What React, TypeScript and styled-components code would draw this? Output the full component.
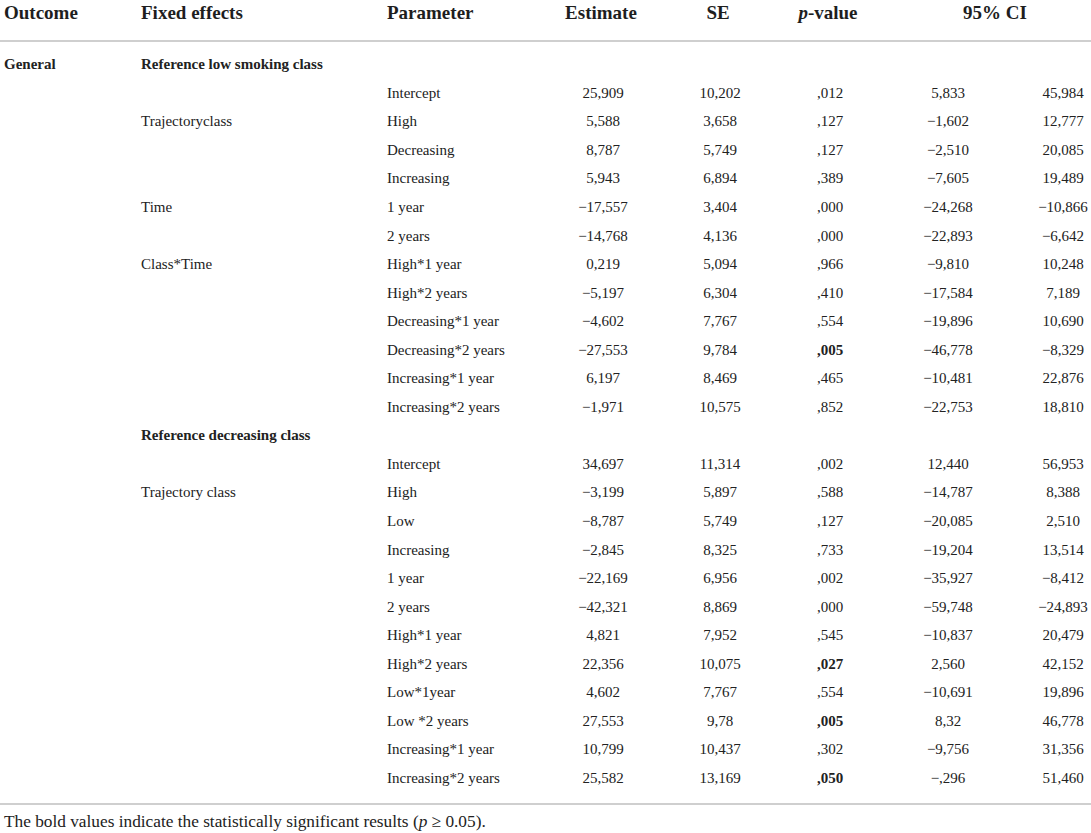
import React from "react";
import styled, { createGlobalStyle } from "styled-components";

const Global = createGlobalStyle`
  html, body { margin: 0; padding: 0; background: #ffffff; }
  body { font-family: "Liberation Serif", "Times New Roman", serif; color: #222222; }
`;

const Page = styled.div`
  width: 1091px;
`;

const Table = styled.table`
  width: 1091px;
  table-layout: fixed;
  border-collapse: collapse;
  border-spacing: 0;
`;

const HeadCell = styled.th<{ $align?: "left" | "center"; $pad?: number }>`
  height: 38px;
  padding: 2px 4px 0 ${(p) => (p.$pad ?? 4)}px;
  vertical-align: top;
  text-align: ${(p) => p.$align ?? "center"};
  font-size: 19px;
  line-height: 22px;
  font-weight: 700;
  color: #1e1e1e;
  border-bottom: 2px solid #cfcfcf;
  white-space: nowrap;
`;

const Row = styled.tr`
  height: 28.56px;
`;

const Spacer = styled.tr<{ $h: number; $line?: boolean }>`
  height: ${(p) => p.$h}px;
  & > td {
    padding: 0;
    border-bottom: ${(p) => (p.$line ? "2px solid #cfcfcf" : "none")};
  }
`;

const Label = styled.td<{ $bold?: boolean }>`
  padding: 0 4px;
  vertical-align: middle;
  text-align: left;
  font-size: 15px;
  line-height: 18px;
  font-weight: ${(p) => (p.$bold ? 700 : 400)};
  white-space: nowrap;
`;

const Num = styled.td<{ $bold?: boolean; $pad?: number }>`
  padding: 0 0 0 ${(p) => p.$pad ?? 0}px;
  vertical-align: middle;
  text-align: center;
  font-size: 15px;
  line-height: 18px;
  font-weight: ${(p) => (p.$bold ? 700 : 400)};
  white-space: nowrap;
`;

const Note = styled.p`
  margin: 7px 0 0 4px;
  font-size: 17.3px;
  line-height: 20px;
  color: #222222;
`;

type R = {
  outcome?: string;
  fixed?: string;
  fixedBold?: boolean;
  param?: string;
  v?: [string, string, string, string, string];
  pBold?: boolean;
};

const M = "\u2212";

const rows: R[] = [
  { outcome: "General", fixed: "Reference low smoking class", fixedBold: true },
  { param: "Intercept", v: ["25,909", "10,202", ",012", "5,833", "45,984"] },
  { fixed: "Trajectoryclass", param: "High", v: ["5,588", "3,658", ",127", `${M}1,602`, "12,777"] },
  { param: "Decreasing", v: ["8,787", "5,749", ",127", `${M}2,510`, "20,085"] },
  { param: "Increasing", v: ["5,943", "6,894", ",389", `${M}7,605`, "19,489"] },
  { fixed: "Time", param: "1 year", v: [`${M}17,557`, "3,404", ",000", `${M}24,268`, `${M}10,866`] },
  { param: "2 years", v: [`${M}14,768`, "4,136", ",000", `${M}22,893`, `${M}6,642`] },
  { fixed: "Class*Time", param: "High*1 year", v: ["0,219", "5,094", ",966", `${M}9,810`, "10,248"] },
  { param: "High*2 years", v: [`${M}5,197`, "6,304", ",410", `${M}17,584`, "7,189"] },
  { param: "Decreasing*1 year", v: [`${M}4,602`, "7,767", ",554", `${M}19,896`, "10,690"] },
  { param: "Decreasing*2 years", v: [`${M}27,553`, "9,784", ",005", `${M}46,778`, `${M}8,329`], pBold: true },
  { param: "Increasing*1 year", v: ["6,197", "8,469", ",465", `${M}10,481`, "22,876"] },
  { param: "Increasing*2 years", v: [`${M}1,971`, "10,575", ",852", `${M}22,753`, "18,810"] },
  { fixed: "Reference decreasing class", fixedBold: true },
  { param: "Intercept", v: ["34,697", "11,314", ",002", "12,440", "56,953"] },
  { fixed: "Trajectory class", param: "High", v: [`${M}3,199`, "5,897", ",588", `${M}14,787`, "8,388"] },
  { param: "Low", v: [`${M}8,787`, "5,749", ",127", `${M}20,085`, "2,510"] },
  { param: "Increasing", v: [`${M}2,845`, "8,325", ",733", `${M}19,204`, "13,514"] },
  { param: "1 year", v: [`${M}22,169`, "6,956", ",002", `${M}35,927`, `${M}8,412`] },
  { param: "2 years", v: [`${M}42,321`, "8,869", ",000", `${M}59,748`, `${M}24,893`] },
  { param: "High*1 year", v: ["4,821", "7,952", ",545", `${M}10,837`, "20,479"] },
  { param: "High*2 years", v: ["22,356", "10,075", ",027", "2,560", "42,152"], pBold: true },
  { param: "Low*1year", v: ["4,602", "7,767", ",554", `${M}10,691`, "19,896"] },
  { param: "Low *2 years", v: ["27,553", "9,78", ",005", "8,32", "46,778"], pBold: true },
  { param: "Increasing*1 year", v: ["10,799", "10,437", ",302", `${M}9,756`, "31,356"] },
  { param: "Increasing*2 years", v: ["25,582", "13,169", ",050", `${M},296`, "51,460"], pBold: true },
];

const widths = [137, 246, 162, 116, 118, 102, 134, 76];

export default function App() {
  return (
    <Page>
      <Global />
      <Table>
        <colgroup>
          {widths.map((w, i) => (
            <col key={i} style={{ width: w }} />
          ))}
        </colgroup>
        <thead>
          <tr>
            <HeadCell $align="left">Outcome</HeadCell>
            <HeadCell $align="left">Fixed effects</HeadCell>
            <HeadCell $align="left">Parameter</HeadCell>
            <HeadCell $pad={0}>Estimate</HeadCell>
            <HeadCell $pad={0}>SE</HeadCell>
            <HeadCell $pad={0}>
              <i>p</i>-value
            </HeadCell>
            <HeadCell colSpan={2} $pad={22}>
              95% CI
            </HeadCell>
          </tr>
        </thead>
        <tbody>
          <Spacer $h={9}>
            <td colSpan={8} />
          </Spacer>
          {rows.map((r, i) => (
            <Row key={i}>
              <Label $bold>{r.outcome ?? ""}</Label>
              <Label $bold={r.fixedBold}>{r.fixed ?? ""}</Label>
              <Label>{r.param ?? ""}</Label>
              {r.v ? (
                <>
                  <Num>{r.v[0]}</Num>
                  <Num>{r.v[1]}</Num>
                  <Num $bold={r.pBold}>{r.v[2]}</Num>
                  <Num>{r.v[3]}</Num>
                  <Num $pad={20}>{r.v[4]}</Num>
                </>
              ) : (
                <>
                  <Num />
                  <Num />
                  <Num />
                  <Num />
                  <Num $pad={20} />
                </>
              )}
            </Row>
          ))}
          <Spacer $h={12} $line>
            <td colSpan={8} />
          </Spacer>
        </tbody>
      </Table>
      <Note>
        The bold values indicate the statistically significant results (<i>p</i> ≥ 0.05).
      </Note>
    </Page>
  );
}
